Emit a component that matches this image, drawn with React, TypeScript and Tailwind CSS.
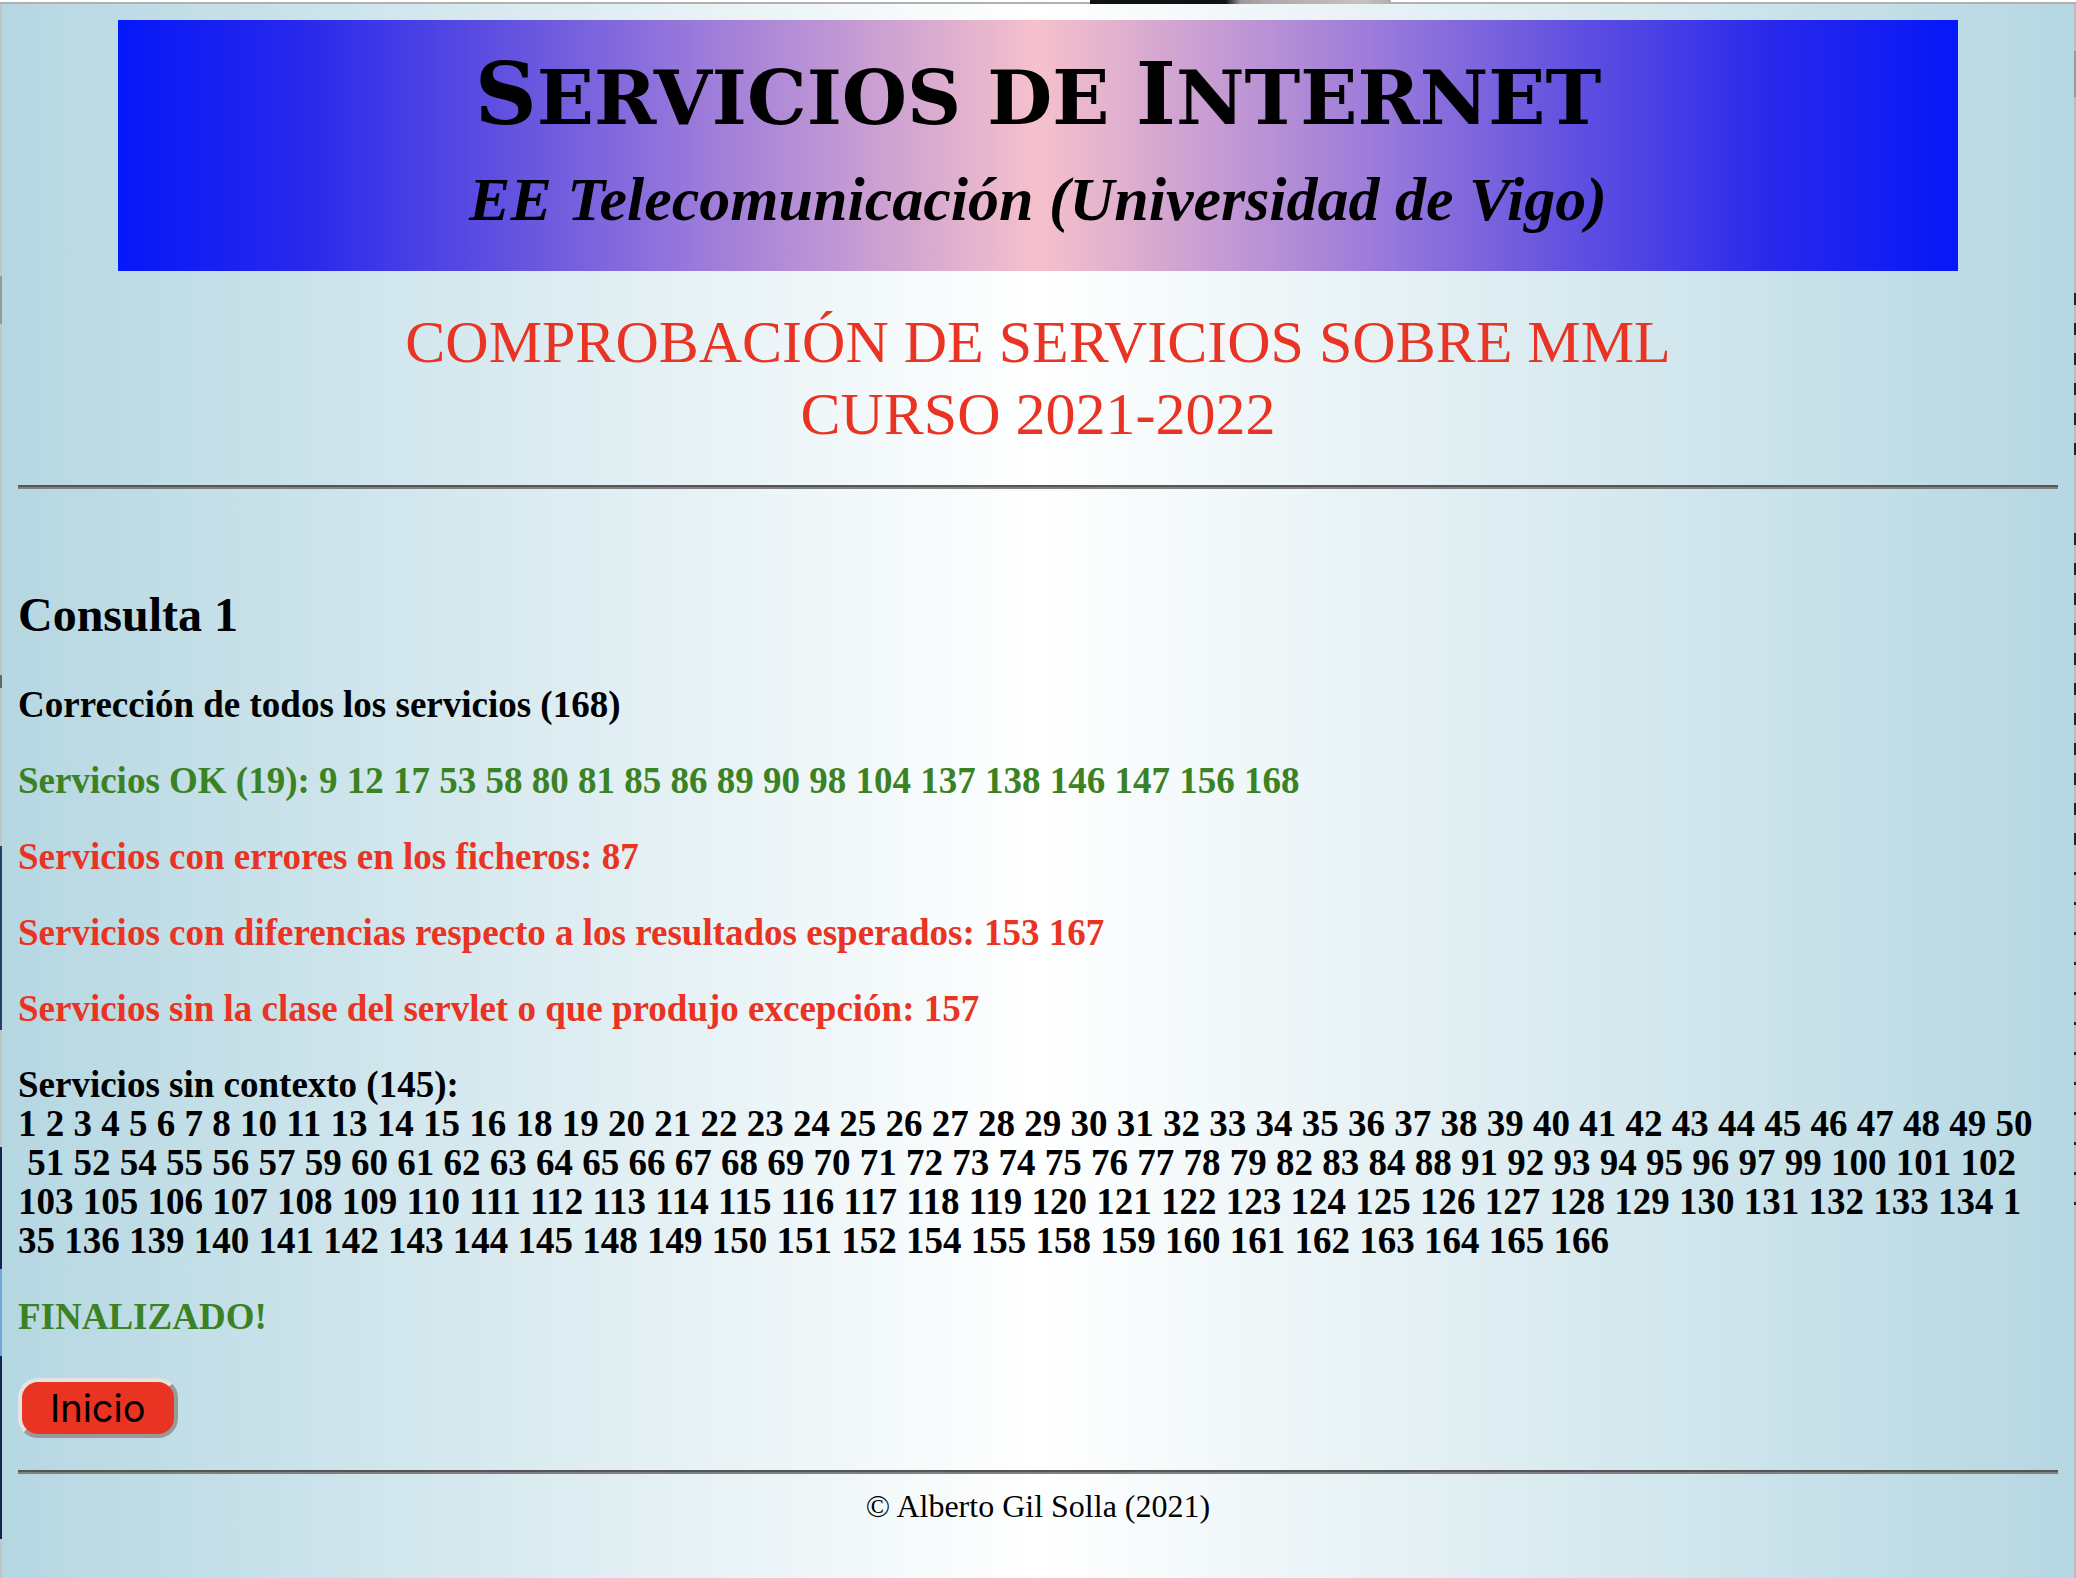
const WITHOUT_CONTEXT = [
  "1 2 3 4 5 6 7 8 10 11 13 14 15 16 18 19 20 21 22 23 24 25 26 27 28 29 30 31 32 33 34 35 36 37 38 39 40 41 42 43 44 45 46 47 48 49 50",
  " 51 52 54 55 56 57 59 60 61 62 63 64 65 66 67 68 69 70 71 72 73 74 75 76 77 78 79 82 83 84 88 91 92 93 94 95 96 97 99 100 101 102",
  "103 105 106 107 108 109 110 111 112 113 114 115 116 117 118 119 120 121 122 123 124 125 126 127 128 129 130 131 132 133 134 1",
  "35 136 139 140 141 142 143 144 145 148 149 150 151 152 154 155 158 159 160 161 162 163 164 165 166",
];

function Rule() {
  return <hr className="h-1 border-0 border-t-2 border-[#555] bg-[#808080]" />;
}

/* Slivers of the desktop that show on either side of the window. */
function LeftEdge() {
  return (
    <div
      aria-hidden="true"
      className="w-0.5 bg-[linear-gradient(to_bottom,#c4c4c4_272px,#999_272px_320px,#c4c4c4_320px_671px,#666_671px_684px,#c4c4c4_684px_842px,#2c3c68_842px_1026px,#c4c4c4_1026px_1143px,#14234d_1143px_1265px,#6ea6d6_1265px_1352px,#14234d_1352px_1535px,#c4c4c4_1535px)]"
    />
  );
}

function RightEdge() {
  return (
    <div aria-hidden="true" className="w-0.5 bg-[#bcbcbc]">
      <div className="h-[47px]" />
      <div className="h-[46px] bg-[#999]" />
      <div className="h-[178px]" />
      <div className="h-[180px] bg-[repeating-linear-gradient(to_bottom,transparent_0_18px,#222_18px_30px)]" />
      <div className="h-[60px]" />
      <div className="h-[330px] bg-[repeating-linear-gradient(to_bottom,transparent_0_18px,#222_18px_30px)]" />
      <div className="h-[360px] bg-[repeating-linear-gradient(to_bottom,transparent_0_27px,#222_27px_30px)]" />
    </div>
  );
}

export default function App() {
  return (
    <div className="flex min-h-screen flex-col bg-white font-['Liberation_Serif',serif] text-black">
      <div
        aria-hidden="true"
        className="h-1 border-b-2 border-[#b0b0b0] bg-white"
      >
        <div className="ml-[52.5%] h-1 w-[14.5%] bg-[linear-gradient(to_right,#111_45%,#999_50%,#b0a8a8_58%,#c8c0c0_90%,#b0b0b0)]" />
      </div>
      <div className="flex flex-1">
        <LeftEdge />
        <div className="min-w-0 flex-1 bg-[linear-gradient(to_right,#b5d7e2,#fff_50%,#b5d7e2)] px-4 pt-4 pb-12">
          <header className="mx-[100px] flex h-[251px] flex-col items-center bg-[linear-gradient(to_right,#0518f8,#2828ec_10%,#6151e0_21%,#9d7cda_32%,#f6c1cb_50%,#9d7cda_68%,#6151e0_79%,#2828ec_90%,#0518f8)] pt-7">
            <h1 className="font-['DejaVu_Serif',serif] text-[75px] leading-[92px] font-bold whitespace-nowrap uppercase">
              <span className="text-[86px]">S</span>ervicios de <span className="text-[86px]">I</span>nternet
            </h1>
            <p className="text-[62px] leading-[110px] font-bold whitespace-nowrap italic">
              EE Telecomunicación (Universidad de Vigo)
            </p>
          </header>
          <h2 className="mt-[35px] mb-[35px] text-center text-[60px] leading-[72px] text-[#e93323]">
            COMPROBACIÓN DE SERVICIOS SOBRE MML
            <br />
            CURSO 2021-2022
          </h2>
          <Rule />
          <main className="pb-8 text-[37px] leading-[39px] font-bold">
            <h2 className="mt-[98px] mb-[42px] text-[48px] leading-[56px]">Consulta 1</h2>
            <div className="flex flex-col gap-[37px]">
              <h3>Corrección de todos los servicios (168)</h3>
              <p className="text-[#3a8223]">
                Servicios OK (19): 9 12 17 53 58 80 81 85 86 89 90 98 104 137 138 146 147 156 168
              </p>
              <p className="text-[#e93323]">Servicios con errores en los ficheros: 87</p>
              <p className="text-[#e93323]">
                Servicios con diferencias respecto a los resultados esperados: 153 167
              </p>
              <p className="text-[#e93323]">
                Servicios sin la clase del servlet o que produjo excepción: 157
              </p>
              <div>
                <h3>Servicios sin contexto (145):</h3>
                {WITHOUT_CONTEXT.map((line) => (
                  <p key={line} className="whitespace-pre">
                    {line}
                  </p>
                ))}
              </div>
              <p className="text-[#3a8223]">FINALIZADO!</p>
            </div>
            <button
              type="button"
              className="mt-[42px] block h-[60px] rounded-[20px] border-4 border-t-[#e3e3e3] border-r-[#999] border-b-[#999] border-l-[#e3e3e3] bg-[#e93323] px-7 font-[Inter,sans-serif] text-[38px] leading-[52px] font-normal"
            >
              Inicio
            </button>
          </main>
          <Rule />
          <footer className="mt-[14px] text-center text-[32px] leading-9">© Alberto Gil Solla (2021)</footer>
        </div>
        <RightEdge />
      </div>
    </div>
  );
}
